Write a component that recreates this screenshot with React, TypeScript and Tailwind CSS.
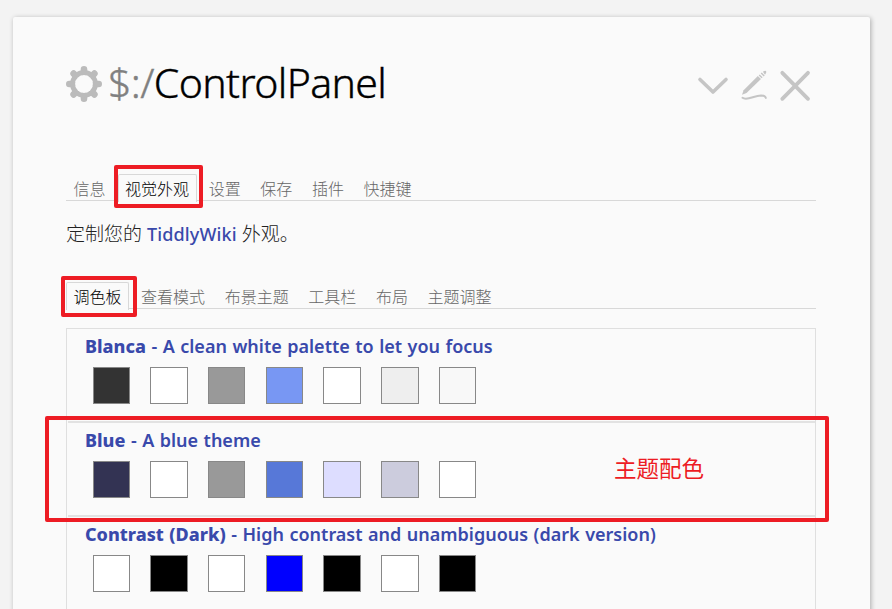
import React from 'react';

type Palette = { name: string; description: string; colours: string[] };

const palettes: Palette[] = [
  {
    name: 'Blanca',
    description: 'A clean white palette to let you focus',
    colours: ['#333333', '#ffffff', '#999999', '#7897f3', '#ffffff', '#eeeeee', '#f8f8f8'],
  },
  {
    name: 'Blue',
    description: 'A blue theme',
    colours: ['#333353', '#ffffff', '#999999', '#5778d8', '#ddddff', '#ccccdd', '#ffffff'],
  },
  {
    name: 'Contrast (Dark)',
    description: 'High contrast and unambiguous (dark version)',
    colours: ['#ffffff', '#000000', '#ffffff', '#0000ff', '#000000', '#ffffff', '#000000'],
  },
];

function Highlight({ className }: { className: string }) {
  return <div className={`pointer-events-none absolute rounded-[2px] border-4 border-[#ed1c24] ${className}`} />;
}

function TabBar({ tabs, selected, mark }: { tabs: string[]; selected: number; mark: string }) {
  return (
    <div className="flex h-[27px] items-end gap-[4.6px] border-b border-[#d8d8d8]">
      {tabs.map((tab, i) =>
        i === selected ? (
          <div
            key={tab}
            className="relative -mb-[2px] h-7 rounded-t-[2px] border border-b-0 border-[#d8d8d8] bg-[#fafafa] px-[6.5px] pt-[2px] text-base leading-6 font-light whitespace-nowrap text-black"
          >
            {tab}
            <Highlight className={mark} />
          </div>
        ) : (
          <div key={tab} className="h-[26px] px-[7.5px] pt-[3px] text-base leading-6 font-light whitespace-nowrap text-[#666]">
            {tab}
          </div>
        ),
      )}
    </div>
  );
}

function Gear() {
  return (
    <svg className="h-9 w-9 shrink-0" viewBox="-18 -18 36 36">
      <g stroke="#bbb" strokeWidth="6.6" strokeLinecap="round">
        <path d="M0-14.7V-11M0 14.7V11M-14.7 0H-11M14.7 0H11M-10.4-10.4L-8-8M10.4-10.4L8-8M-10.4 10.4L-8 8M10.4 10.4L8 8" />
      </g>
      <circle r="11.4" fill="none" stroke="#bbb" strokeWidth="5" />
      <circle r="8.9" fill="#fafafa" />
    </svg>
  );
}

function Toolbar() {
  return (
    <svg className="h-10 w-[120px]" viewBox="694 66 120 40" fill="none" stroke="#c5c5c5" strokeLinecap="round">
      <path d="M700 79.5L713 92L726 79.5" strokeWidth="3.6" strokeLinejoin="round" />
      <path d="M782.3 72.8L808 98.8M808 72.8L782.3 98.8" strokeWidth="3.8" />
      <path d="M742 94.8L743.6 90.3L757.8 76L761 79L746.5 93Z" fill="#c5c5c5" stroke="none" />
      <path d="M759.2 74.9L762.1 77.8M761.2 73L764.2 76" strokeWidth="1.4" strokeLinecap="butt" />
      <path d="M762.9 71.7Q765.5 70.2 766.2 71.2Q766.8 72.6 765 74.8Z" fill="#c5c5c5" stroke="none" />
      <path d="M742.5 97.8C747 101 754 95.6 761 95.4C764 95.4 765.5 96.5 765.8 97.9" strokeWidth="2" />
    </svg>
  );
}

export default function App() {
  return (
    <div className="h-[609px] w-[892px] overflow-hidden bg-[#f3f3f3] pt-[17px] pl-[13px] font-['Noto_Sans','Noto_Sans_CJK_SC',sans-serif]">
      <main className="h-[620px] w-[857px] rounded-[2px] bg-[#fafafa] pr-[54px] pl-[53px] shadow-[1px_1px_5px_rgba(0,0,0,0.3)]">
        <header className="flex h-[157px] items-start justify-between pt-[35px]">
          <div className="flex h-16 items-center">
            <Gear />
            <h1 className="-mt-1 ml-[6px] text-[41px] leading-[64px] font-light tracking-[-0.62px] whitespace-nowrap text-black [-webkit-text-stroke:0.4px]">
              <span className="text-[#808080]">$:/</span>ControlPanel
            </h1>
          </div>
          <div className="mt-[14px] mr-[2px]">
            <Toolbar />
          </div>
        </header>

        <TabBar
          tabs={['信息', '视觉外观', '设置', '保存', '插件', '快捷键']}
          selected={1}
          mark="-top-[10px] -left-[5px] h-[43px] w-[89px]"
        />
        <p className="mt-[17px] h-8 text-[19px] leading-8 font-light whitespace-nowrap text-[#222]">
          定制您的 <a className="text-[18px] font-medium tracking-[0.15px] text-[#3949ab]">TiddlyWiki</a> 外观。
        </p>
        <div className="mt-8">
          <TabBar
            tabs={['调色板', '查看模式', '布景主题', '工具栏', '布局', '主题调整']}
            selected={0}
            mark="-top-[7px] -left-[6px] h-[41px] w-[76px]"
          />
        </div>

        <section className="mt-[19px] border border-[#dfdfdf]">
          {palettes.map((p) => (
            <article key={p.name} className="relative ml-px h-[94px] border-b-2 border-[#e2e2e2] pl-[17px]">
              <h2 className="h-[38px] pt-1 text-[18px] leading-[26px] font-semibold whitespace-nowrap text-[#3949ab] [word-spacing:0.8px]">
                <strong className="font-extrabold">{p.name}</strong> - {p.description}
              </h2>
              <div className="flex gap-[20.3px] pl-[7.7px]">
                {p.colours.map((c, n) => (
                  <div key={n} className="h-[37px] w-[37.4px] border border-[#888]" style={{ backgroundColor: c }} />
                ))}
              </div>
              {p.name === 'Blue' && (
                <>
                  <Highlight className="-top-[7px] -left-[23px] h-[106px] w-[784px]" />
                  <span className="absolute top-[28px] left-[546px] text-[22.5px] leading-9 text-[#ed1c24]">主题配色</span>
                </>
              )}
            </article>
          ))}
        </section>
      </main>
    </div>
  );
}
